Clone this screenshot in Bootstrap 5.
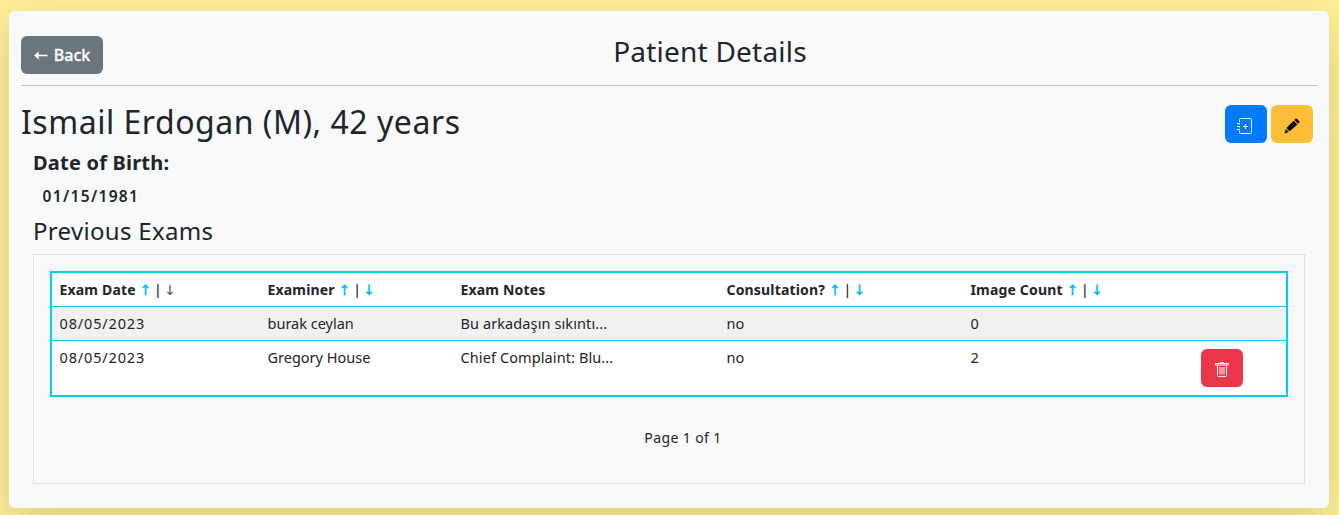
<!DOCTYPE html>
<html lang="en">
<head>
<meta charset="utf-8">
<meta name="viewport" content="width=device-width, initial-scale=1">
<title>Patient Details</title>
<link href="https://cdn.jsdelivr.net/npm/bootstrap@5.3.0/dist/css/bootstrap.min.css" rel="stylesheet">
<style>
  body { background: #ffef97; font-family: "Noto Sans", "Open Sans", sans-serif; height: 515px; overflow: hidden; padding: 11px 10px 7px 9px; color: #212529; }
  .panel { background: #f8f9fb; height: 497px; border-radius: 6px; padding: 0 12px; }
  .panel-head { height: 75px; padding-top: 25px; border-bottom: 1px solid #c0c2c4; }
  .btn { border: 0; height: 38px; padding: 0; }
  .btn-back { width: 82px; background: #6a767c; color: #fff; font-size: 16px; font-weight: 500; -webkit-text-stroke: .3px #fff; }
  .btn-back svg { margin-right: 6px; vertical-align: 1px; }
  .btn-square { width: 42px; display: inline-flex; align-items: center; justify-content: center; }
  .btn-exam, .btn-exam:hover { background: #007bff; }
  .btn-edit { background: #ffbe37; }
  .btn-trash { background: #eb3549; }
  .page-title { font-size: 28px; line-height: 34px; margin-top: -2px; font-weight: 400; letter-spacing: .22px; }
  .patient { padding: 19px 4px 0 0; height: 64px; }
  .patient-name { font-size: 32px; line-height: 38px; margin-top: -2px; font-weight: 400; letter-spacing: .52px; }
  .details { padding: 0 12px; }
  .dob-label { font-size: 20px; line-height: 26px; font-weight: 700; letter-spacing: .2px; }
  .dob-value { font-size: 15.500px; line-height: 20px; font-weight: 600; letter-spacing: 1.35px; padding: 10px 0 0 9.500px; }
  .section-title { font-size: 24px; line-height: 30px; font-weight: 400; letter-spacing: .32px; padding-top: 10px; margin: 0 0 8px; }
  .exam-box { height: 230px; border: 1px solid #dee2e6; padding: 16px; }
  .exam-table { --bs-table-bg: #fff; table-layout: fixed; border: 2px solid #00cfee; font-size: 14.500px; line-height: 17px; height: 126px; border-collapse: separate; border-spacing: 0; color: #212529; }
  .exam-table > :not(caption) > * > * { border-color: #00cfee; border-bottom-width: 1px; padding: 8px 7px 8px 7.500px; white-space: nowrap; vertical-align: top; height: 34px; }
  .exam-table > tbody > tr:last-child > td { border-bottom: 0; height: 54px; }
  .exam-table > tbody > tr > td:last-child { padding-left: 7px; }
  .exam-table th { font-weight: 700; font-size: 14px; letter-spacing: .17px; }
  .exam-table .row-shade > td { background: #f1f1f1; }
  .track-date { letter-spacing: .85px; }
  .track-note { letter-spacing: .1px; }
  .sort { display: inline-block; width: 12px; text-align: center; color: #00b7ff; font: 400 14px/14px "DejaVu Sans", sans-serif; letter-spacing: 0; -webkit-text-stroke: .4px currentColor; }
  .sort-off { color: #555; -webkit-text-stroke: 0; }
  .sorter { display: inline-flex; align-items: center; height: 17px; margin-left: 4px; vertical-align: top; }
  .divider { font-weight: 500; width: 12.500px; text-align: center; letter-spacing: 0; }
  .pager { font-size: 14px; line-height: 20px; letter-spacing: .4px; padding: 31px 0 0 28px; }
</style>
</head>
<body>
<main class="panel shadow-lg">
  <header class="panel-head d-flex">
    <button class="btn btn-back"><svg width="14" height="9" viewBox="0 0 14 9"><path d="M0 4.500 4.600.5v8z" fill="#fff"/><path d="M3 4.500h10.500" stroke="#fff" stroke-width="1.600"/></svg>Back</button>
    <h2 class="page-title flex-fill text-center mb-0">Patient Details</h2>
  </header>
  <div class="patient d-flex justify-content-between">
    <h1 class="patient-name mb-0">Ismail Erdogan (M), 42 years</h1>
    <div class="d-flex gap-1">
      <button class="btn btn-square btn-exam" aria-label="New exam"><svg class="mt-1 me-1" width="16" height="16" viewBox="0 0 16 16" fill="none" stroke="#fff"><path d="M3.500 4V1.500a1 1 0 0 1 1-1h10a1 1 0 0 1 1 1v13a1 1 0 0 1-1 1h-10a1 1 0 0 1-1-1V13"/><path d="M1 5.500h3M1 8.500h3M1 11.500h3M3.500 5v1.500M3.500 8v1.500M3.500 11v1.500M9.500 6v5M7 8.500h5"/></svg></button>
      <button class="btn btn-square btn-edit" aria-label="Edit"><svg class="mt-1" width="16" height="16" viewBox="0 0 17 17"><path d="M12.300.9a1 1 0 0 1 1.300 0l2.600 2.600a1 1 0 0 1 0 1.300l-1.300 1.300-3.900-3.900zM10.300 2.900l3.900 3.900-8.200 7.400-3.400-3.500zM2 11.600l3.200 3.300L.5 16.500z"/></svg></button>
    </div>
  </div>
  <div class="details">
    <div class="dob-label">Date of Birth:</div>
    <div class="dob-value">01/15/1981</div>
    <h3 class="section-title">Previous Exams</h3>
    <section class="exam-box">
      <table class="table exam-table mb-0">
        <colgroup><col style="width:208px"><col style="width:193px"><col style="width:266px"><col style="width:244px"><col style="width:231px"><col></colgroup>
        <thead><tr>
          <th>Exam Date<span class="sorter"><span class="sort">↑</span><span class="divider">|</span><span class="sort sort-off">↓</span></span></th>
          <th>Examiner<span class="sorter"><span class="sort">↑</span><span class="divider">|</span><span class="sort">↓</span></span></th>
          <th>Exam Notes</th>
          <th>Consultation?<span class="sorter"><span class="sort">↑</span><span class="divider">|</span><span class="sort">↓</span></span></th>
          <th>Image Count<span class="sorter"><span class="sort">↑</span><span class="divider">|</span><span class="sort">↓</span></span></th>
          <th></th>
        </tr></thead>
        <tbody>
          <tr class="row-shade"><td class="track-date">08/05/2023</td><td>burak ceylan</td><td class="track-note">Bu arkadaşın sıkıntı...</td><td>no</td><td>0</td><td></td></tr>
          <tr><td class="track-date">08/05/2023</td><td>Gregory House</td><td class="track-note">Chief Complaint: Blu...</td><td>no</td><td>2</td>
            <td><button class="btn btn-square btn-trash" aria-label="Delete"><svg class="mt-1" width="14" height="16" viewBox="0 0 14 16" fill="none" stroke="#fff"><path d="M.5 1.500h13v1.500h-13zM5 .5h4M2.500 3v10.500a1 1 0 0 0 1 1h7a1 1 0 0 0 1-1V3M5 5v7.500M7 5v7.500M9 5v7.500"/></svg></button></td></tr>
        </tbody>
      </table>
      <div class="pager text-center">Page 1 of 1</div>
    </section>
  </div>
</main>
<script src="https://cdn.jsdelivr.net/npm/bootstrap@5.3.0/dist/js/bootstrap.bundle.min.js"></script>
</body>
</html>
